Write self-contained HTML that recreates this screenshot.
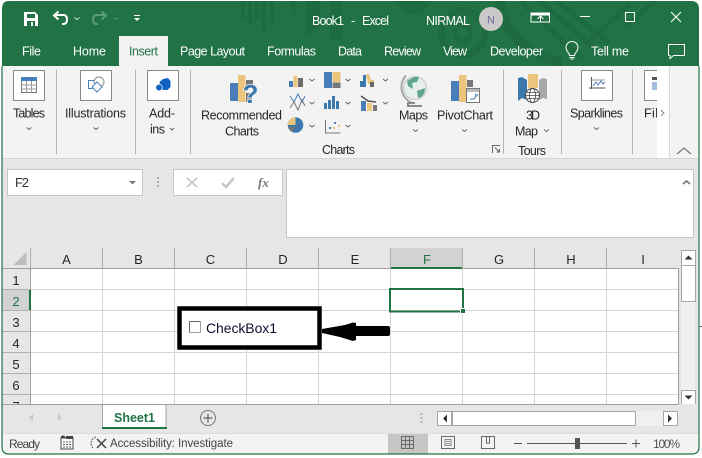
<!DOCTYPE html>
<html><head><meta charset="utf-8"><style>
html,body{margin:0;padding:0;background:#fff;width:702px;height:458px;overflow:hidden}
svg{display:block}
text{font-family:"Liberation Sans",sans-serif;font-size:12.5px;fill:#262626}
.w{fill:#fff}
</style></head><body>
<svg width="702" height="458" viewBox="0 0 702 458" xmlns="http://www.w3.org/2000/svg">
<defs><clipPath id="win"><path d="M9 1H691Q699 1 699 9V447Q699 454 692 454H9Q2 454 2 447V9Q2 1 9 1Z"/></clipPath></defs>
<rect width="702" height="458" fill="#fff"/>
<g clip-path="url(#win)">
<rect x="0" y="0" width="702" height="458" fill="#e6e6e6"/>
<rect x="0" y="0" width="702" height="66" fill="#217346"/>
<!-- title pattern -->
<g fill="#1f6b41">
<rect x="241" y="1" width="4" height="17"/><rect x="248" y="1" width="4" height="24"/><rect x="255" y="1" width="4" height="18"/><rect x="262" y="1" width="4" height="33"/><rect x="270" y="1" width="4" height="21"/>
<path d="M289 1h7l-1 15z"/><path d="M307 1h13v25l-13 10z"/><path d="M330 1h12v38h-12z"/>
<path d="M396 1h36q-6 13-18 13t-18-13z"/>
</g>
<g fill="none" stroke="#1f6b41">
<circle cx="463" cy="33" r="22" stroke-width="7"/>
<circle cx="463" cy="33" r="8" stroke-width="5"/>
<path d="M500 1q8 50 62 61" stroke-width="10"/>
<path d="M520 1l60 56M540 1l55 48M557 1l52 42M630 4l-40 36M655 1l-30 26" stroke-width="5"/>
</g>
<!-- QAT -->
<path d="M24 12h11l3 3v11H24z" fill="#fff"/><rect x="27" y="14" width="8" height="4" fill="#217346"/><rect x="27" y="21" width="8" height="5" fill="#217346"/><rect x="31" y="22" width="2" height="4" fill="#fff"/>
<path d="M55 15h9q3 .5 3 4.500t-3 4.500h-2M58.500 11.500L54 15.500l4.500 4" fill="none" stroke="#fff" stroke-width="2"/>
<path d="M74.500 17.500l2.500 2 2.500-2" fill="none" stroke="#cfe3d7" stroke-width="1"/>
<path d="M105 15h-9q-3 .5-3 4.500t3 4.500h2M101.500 11.500L106 15.500l-4.500 4" fill="none" stroke="#5a9b78" stroke-width="2"/>
<path d="M113.500 17.500l2.500 2 2.500-2" fill="none" stroke="#4d9270" stroke-width="1"/>
<rect x="134" y="15" width="6" height="1" fill="#fff"/><path d="M134 18h6l-3 3z" fill="#fff"/>
<text class="w" x="312" y="25" textLength="32">Book1</text>
<text class="w" x="351" y="25">-</text>
<text class="w" x="362" y="25" textLength="27">Excel</text>
<text class="w" x="426" y="25" textLength="44">NIRMAL</text>
<circle cx="491" cy="19" r="12" fill="#cbc9c8"/>
<text x="491" y="23.500" text-anchor="middle" style="font-size:11px;fill:#6e6a9c">N</text>
<!-- window controls -->
<rect x="531" y="13" width="18.500" height="9" fill="none" stroke="#fff"/><rect x="531" y="13" width="18.500" height="2.500" fill="#fff"/><path d="M540.500 22v-6M537.500 19l3-3 3 3" fill="none" stroke="#fff"/>
<rect x="580" y="16" width="10" height="1" fill="#fff"/>
<rect x="625.500" y="12.500" width="9" height="9" fill="none" stroke="#fff"/>
<path d="M671 12l10 10M681 12l-10 10" stroke="#fff" stroke-width="1.100"/>
<!-- tabs -->
<path d="M119 36h49v31h-49z" fill="#f3f3f3"/>
<text class="w" x="22" y="55.500" textLength="19">File</text>
<text class="w" x="73" y="55.500" textLength="33">Home</text>
<text x="129" y="55.500" textLength="29" style="fill:#217346">Insert</text>
<text class="w" x="180" y="55.500" textLength="65">Page Layout</text>
<text class="w" x="267" y="55.500" textLength="49">Formulas</text>
<text class="w" x="338" y="55.500" textLength="24">Data</text>
<text class="w" x="384" y="55.500" textLength="37">Review</text>
<text class="w" x="443" y="55.500" textLength="24">View</text>
<text class="w" x="490" y="55.500" textLength="53">Developer</text>
<text class="w" x="591" y="55.500" textLength="38">Tell me</text>
<path d="M569.500 55.500c-.3-3-3.500-4-3.500-8a6 6 0 0 1 12 0c0 4-3.200 5-3.500 8zM569.500 57.500h5M570.500 59h3" fill="none" stroke="#fff"/>
<path d="M668.500 44.500h16v11h-11l-3.500 3v-3h-1.500z" fill="none" stroke="#fff"/>
<!-- ribbon -->
<rect x="0" y="66" width="702" height="92" fill="#f3f3f3"/>
<rect x="0" y="158" width="702" height="1" fill="#d6d6d6"/>
<g fill="#b3b3b3"><rect x="56" y="70" width="1" height="84"/><rect x="135" y="70" width="1" height="84"/><rect x="190" y="70" width="1" height="84"/><rect x="503" y="70" width="1" height="84"/><rect x="561" y="70" width="1" height="84"/><rect x="632" y="70" width="1" height="84"/></g>
<!-- boxed icons -->
<g fill="#fff" stroke="#8a8a8a"><rect x="13.500" y="70.500" width="31" height="30"/><rect x="80.500" y="70.500" width="31" height="30"/><rect x="147.500" y="70.500" width="31" height="30"/><rect x="581.500" y="70.500" width="31" height="30"/><rect x="644.500" y="70.500" width="20" height="30"/></g>
<!-- tables -->
<rect x="21.500" y="77.500" width="15" height="15" fill="#fff" stroke="#777"/><rect x="21" y="77" width="16" height="4" fill="#4a7ebb"/>
<path d="M21 85h16M21 89h16M26.500 81v12M31.500 81v12" stroke="#999" fill="none"/>
<!-- illustrations -->
<path d="M94 80.500h-5.500v8h4" fill="none" stroke="#4a7ebb"/><circle cx="99" cy="82" r="5" fill="none" stroke="#8a8a8a"/><path d="M97 82l5 5-5 5-5-5z" fill="#fff" stroke="#4a7ebb"/>
<!-- addins -->
<path d="M163 79l5-1 2.500 3v6l-3 3h-5l-.5-4-2-1-.5-3z" fill="#0f62c0"/><circle cx="159" cy="87.500" r="3.300" fill="#0f62c0" stroke="#fff" stroke-width=".7"/>
<text x="13" y="117.500" textLength="32">Tables</text>
<text x="65" y="117.500" textLength="61">Illustrations</text>
<text x="149" y="117.500" textLength="26">Add-</text>
<text x="150" y="133.500" textLength="15">ins</text>
<text x="201" y="119.500" textLength="81">Recommended</text>
<text x="225" y="135.500" textLength="34">Charts</text>
<text x="399" y="119.500" textLength="29">Maps</text>
<text x="437" y="119.500" textLength="56">PivotChart</text>
<text x="526" y="119.500" textLength="14">3D</text>
<text x="515" y="135.500" textLength="23">Map</text>
<text x="570" y="117.500" textLength="53">Sparklines</text>
<text x="644" y="117.500" textLength="14">Fil</text>
<text x="322" y="154" textLength="33">Charts</text>
<text x="518" y="155" textLength="28">Tours</text>
<!-- chevrons -->
<g fill="none" stroke="#666">
<path d="M26.500 127.500l2.500 2 2.500-2M93.500 127.500l2.500 2 2.500-2M170 128l2 2 2-2M413 129.500l2.500 2 2.500-2M462 129.500l2.500 2 2.500-2M544 129.500l2.500 2 2.500-2M594 127.500l2.500 2 2.500-2"/>
<path d="M309.500 79l2.500 2 2.500-2M345.500 79l2.500 2 2.500-2M383 79l2.500 2 2.500-2M309.500 102l2.500 2 2.500-2M345.500 102l2.500 2 2.500-2M383 102l2.500 2 2.500-2M309.500 125l2.500 2 2.500-2M345.500 125l2.500 2 2.500-2"/>
</g>
<!-- Recommended charts icon -->
<rect x="230" y="83" width="8" height="18" fill="#4a7ebb"/><rect x="238" y="75" width="7.500" height="27" fill="#ecc57c"/><rect x="246" y="80" width="7" height="6" fill="#777"/><rect x="246" y="93" width="6" height="9" fill="#777"/>
<text x="250.500" y="103" text-anchor="middle" style="font-size:26px;font-weight:bold;fill:#3d78ad;stroke:#f3f3f3;stroke-width:1.500px;paint-order:stroke">?</text>
<!-- small charts col 1 -->
<rect x="289" y="81" width="4" height="6" fill="#4a7ebb"/><rect x="293.500" y="76" width="4" height="11" fill="#ecc57c"/><rect x="298" y="78" width="5" height="9" fill="#6d6d6d"/>
<path d="M290 96l4 6 4-8 4 8 3-6" fill="none" stroke="#4a7ebb"/><path d="M290 108l4-6 4 8 4-10 3 6" fill="none" stroke="#777"/>
<circle cx="295.500" cy="125" r="7.800" fill="#3d78ad"/><path d="M295.500 117.200v7.800h-7.800a7.800 7.800 0 0 1 7.800-7.800z" fill="#ecc57c"/><path d="M288 127h7.500l-3.500 4.500q-3-1.500-4-4.500z" fill="#777"/>
<!-- col 2 -->
<rect x="324" y="72" width="8" height="16" fill="#4a7ebb"/><rect x="332.500" y="72" width="8" height="10" fill="#ecc57c"/><rect x="332.500" y="82.500" width="8" height="5.500" fill="#777"/>
<g fill="#3d78ad"><rect x="324" y="103" width="3" height="6"/><rect x="328" y="100" width="3" height="9"/><rect x="332" y="96" width="3" height="13"/><rect x="336" y="101" width="3" height="8"/></g>
<path d="M325.500 120v13h15" fill="none" stroke="#777"/><g fill="#4a7ebb"><rect x="329" y="127" width="2" height="2"/><rect x="334" y="122" width="2" height="2"/></g><g fill="#ecc57c"><rect x="333" y="127" width="2" height="2"/><rect x="338" y="125" width="2" height="2"/></g>
<!-- col 3 -->
<path d="M360 87v-6h3v-6h3v12z" fill="#3d78ad"/><path d="M366 74h3l2 6h3v4h-6z" fill="#ecc57c"/><rect x="370" y="82" width="4" height="5" fill="#666"/>
<rect x="361" y="101" width="5" height="10" fill="#4a7ebb"/><rect x="367" y="103" width="5" height="8" fill="#ecc57c"/><rect x="373" y="105" width="4" height="6" fill="#777"/><path d="M361 96l7 5 8 1" stroke="#555" fill="none" stroke-width="1.500"/>
<!-- globe -->
<path d="M406 75.500a17 17 0 0 0 8 28" fill="none" stroke="#a6a6a6" stroke-width="2"/>
<circle cx="415" cy="88" r="11.500" fill="#e6efea" stroke="#c4c4c4"/><path d="M407 81q6-5 12-4l-2 5-5 1 1 6-5-3zM417 91l8-3q0 6-4 9l-3 1z" fill="#5fa58c"/>
<path d="M415 103h-7v3h14" fill="none" stroke="#8a8a8a" stroke-width="2"/>
<!-- pivot chart -->
<rect x="451" y="81" width="8" height="20" fill="#4a7ebb"/><rect x="459" y="75" width="7.500" height="27" fill="#ecc57c"/><rect x="467" y="80" width="6" height="7" fill="#777"/>
<rect x="466.500" y="88.500" width="13" height="14" fill="#fff" stroke="#777"/><rect x="467" y="89" width="12" height="3" fill="#bbb"/><path d="M470 99h4l2-3M475 94l1.500 2 1.500-2" fill="none" stroke="#3d78ad"/>
<!-- 3d map -->
<path d="M518 78l4-1v21l-4 3zM522 77l5 3v20l-5-2z" fill="#3d78ad"/><rect x="528" y="74" width="10" height="14" fill="#ecc57c"/>
<path d="M539 80l4-2 4 1v20l-4-1-4 2z" fill="#a8a8a8"/>
<circle cx="532.500" cy="95.500" r="7" fill="#fff" stroke="#444"/><ellipse cx="532.500" cy="95.500" rx="3" ry="7" fill="none" stroke="#444" stroke-width=".8"/><path d="M526 95.500h13M527 92.500h11M527 98.500h11" stroke="#444" stroke-width=".7"/>
<!-- sparklines -->
<path d="M591.500 77v12M589 88h16.500" stroke="#555" fill="none"/><path d="M593 86l3-4 2 3 3-4 2 3 2-2" stroke="#4a7ebb" fill="none"/><path d="M590 80h15" stroke="#999"/>
<!-- filters partial -->
<rect x="652" y="77" width="6" height="3" fill="#555"/><rect x="652" y="82" width="5" height="8" fill="#4a7ebb" opacity=".5"/>
<!-- white scroller -->
<rect x="657" y="66" width="12.500" height="92" fill="#fff"/><rect x="669" y="66" width="1" height="92" fill="#d8d8d8"/>
<path d="M661 110l3 3-3 3" fill="none" stroke="#888"/>
<path d="M677 154l7-6 7 6" fill="none" stroke="#555"/>
<!-- dialog launcher -->
<path d="M492.500 153v-7.500h7.500M495 147.500l4 4M499.500 149v3h-3" fill="none" stroke="#666"/>
<!-- formula row -->
<rect x="7.500" y="169.500" width="135" height="26" fill="#fff" stroke="#c6c6c6"/>
<text x="15" y="187" textLength="14" style="font-size:13px;fill:#333">F2</text>
<path d="M129 181h7l-3.500 3.500z" fill="#777"/>
<g fill="#aaa"><rect x="157" y="177" width="2" height="2"/><rect x="157" y="181" width="2" height="2"/><rect x="157" y="185" width="2" height="2"/></g>
<rect x="173.500" y="169.500" width="109" height="26" fill="#fff" stroke="#c6c6c6"/>
<path d="M187 178l10 9M197 178l-10 9" stroke="#c6c6c6" stroke-width="1.800"/>
<path d="M222 183l4 4 8-9" stroke="#c6c6c6" stroke-width="2.500" fill="none"/>
<text x="258" y="187" style="font-family:'Liberation Serif',serif;font-style:italic;font-weight:bold;font-size:13px;fill:#777">fx</text>
<rect x="286.500" y="169.500" width="407" height="68" fill="#fff" stroke="#c6c6c6"/>
<path d="M683 184l3.500-3 3.500 3" fill="none" stroke="#777" stroke-width="1.800"/>
<!-- grid -->
<rect x="2" y="248" width="677" height="20" fill="#e6e6e6"/>
<rect x="2" y="268" width="28" height="137" fill="#e6e6e6"/>
<rect x="30" y="268" width="648" height="137" fill="#fff"/>
<rect x="390.500" y="248" width="72" height="20" fill="#d2d2d2"/>
<rect x="2" y="289" width="28" height="21" fill="#d2d2d2"/>
<path d="M26.500 252v13h-13z" fill="#bdbdbd"/>
<rect x="2" y="268" width="676" height="1" fill="#9f9f9f"/>
<g stroke="#d4d4d4"><path d="M102.500 269V405M174.500 269V405M246.500 269V405M318.500 269V405M390.500 269V405M462.500 269V405M534.500 269V405M606.500 269V405"/><path d="M30 289.500H678M30 310.500H678M30 331.500H678M30 352.500H678M30 373.500H678M30 394.500H678"/></g>
<g stroke="#b0b0b0"><path d="M30.500 248V268M102.500 248V268M174.500 248V268M246.500 248V268M318.500 248V268M390.500 248V268M462.500 248V268M534.500 248V268M606.500 248V268"/><path d="M2 289.500H30M2 310.500H30M2 331.500H30M2 352.500H30M2 373.500H30M2 394.500H30"/></g>
<rect x="30" y="268" width="1" height="137" fill="#9f9f9f"/>
<rect x="678" y="268" width="1" height="137" fill="#9f9f9f"/>
<rect x="391" y="267" width="71" height="2" fill="#217346"/>
<rect x="29" y="290" width="2" height="20" fill="#217346"/>
<text x="66.500" y="264" text-anchor="middle" style="font-size:13px">A</text>
<text x="138.500" y="264" text-anchor="middle" style="font-size:13px">B</text>
<text x="210.500" y="264" text-anchor="middle" style="font-size:13px">C</text>
<text x="283" y="264" text-anchor="middle" style="font-size:13px">D</text>
<text x="355" y="264" text-anchor="middle" style="font-size:13px">E</text>
<text x="427" y="264" text-anchor="middle" style="font-size:13px;fill:#217346">F</text>
<text x="499" y="264" text-anchor="middle" style="font-size:13px">G</text>
<text x="571" y="264" text-anchor="middle" style="font-size:13px">H</text>
<text x="643" y="264" text-anchor="middle" style="font-size:13px">I</text>
<text x="16" y="285" text-anchor="middle" style="font-size:13px">1</text>
<text x="16" y="306" text-anchor="middle" style="font-size:13px;fill:#217346">2</text>
<text x="16" y="327" text-anchor="middle" style="font-size:13px">3</text>
<text x="16" y="348" text-anchor="middle" style="font-size:13px">4</text>
<text x="16" y="369" text-anchor="middle" style="font-size:13px">5</text>
<text x="16" y="390" text-anchor="middle" style="font-size:13px">6</text>
<text x="16" y="411" text-anchor="middle" style="font-size:13px">7</text>
<!-- selection -->
<rect x="390" y="289" width="73" height="22.500" fill="none" stroke="#217346" stroke-width="2"/>
<rect x="460.500" y="308.500" width="5" height="5" fill="#217346" stroke="#fff"/>
<!-- annotation box -->
<rect x="179.500" y="308.500" width="140" height="39" fill="#fff" stroke="#000" stroke-width="4.500"/>
<rect x="189.500" y="321.500" width="11" height="11" fill="#fff" stroke="#a0a0a0"/>
<path d="M189.500 332v-10.500H200" fill="none" stroke="#666"/>
<text x="206" y="333" textLength="71" style="font-size:14px;fill:#0f1030">CheckBox1</text>
<path d="M322 329L345 325L353 322.500L356 323V326H388Q390 326 390 328V334Q390 336 388 336H356V340L353 341L340 337L322 333z" fill="#000"/>
<!-- vertical scrollbar -->
<rect x="680" y="248" width="19" height="157" fill="#e6e6e6"/>
<rect x="681" y="265" width="14" height="125" fill="#f0f0f0"/>
<rect x="681.500" y="250.500" width="14" height="15" fill="#fff" stroke="#a6a6a6"/>
<path d="M684.500 259.500h8l-4-4z" fill="#333"/>
<rect x="681.500" y="265.500" width="14" height="36" fill="#fff" stroke="#a6a6a6"/>
<rect x="681.500" y="390.500" width="14" height="14" fill="#fff" stroke="#a6a6a6"/>
<path d="M684.500 395.500h8l-4 4z" fill="#333"/>
<!-- sheet bar -->
<rect x="2" y="404" width="697" height="29" fill="#e6e6e6"/>
<rect x="2" y="404" width="677" height="1" fill="#9f9f9f"/>
<path d="M33 414v7l-4-3.500zM58 414v7l4-3.500z" fill="#c6c6c6"/>
<path d="M102.500 405v23h63.500v-23" fill="#fff" stroke="#a6a6a6"/>
<rect x="102" y="427" width="65" height="2" fill="#217346"/>
<text x="114" y="422" textLength="41" style="font-weight:bold;font-size:12.500px;fill:#217346">Sheet1</text>
<circle cx="208" cy="418" r="7.500" fill="none" stroke="#777"/><path d="M203.500 418h9M208 413.500v9" stroke="#777" stroke-width="1.400"/>
<g fill="#c2c2c2"><rect x="420" y="413" width="3" height="2"/><rect x="420" y="417" width="3" height="2"/><rect x="420" y="421" width="3" height="2"/></g>
<rect x="437" y="411" width="240" height="15" fill="#f0f0f0"/>
<rect x="437.500" y="411.500" width="14" height="14" fill="#fff" stroke="#a6a6a6"/>
<path d="M447 414.500v8l-4-4z" fill="#333"/>
<rect x="452.500" y="411.500" width="183" height="14" fill="#fff" stroke="#a6a6a6"/>
<rect x="663.500" y="411.500" width="14" height="14" fill="#fff" stroke="#a6a6a6"/>
<path d="M668 414.500v8l4-4z" fill="#333"/>
<!-- status bar -->
<rect x="2" y="433" width="697" height="22" fill="#f3f3f3"/>
<rect x="2" y="433" width="697" height="1" fill="#dcdcdc"/>
<text x="9" y="448" textLength="31" style="font-size:12px;fill:#444">Ready</text>
<circle cx="63" cy="438" r="2.500" fill="#444"/><rect x="61" y="438" width="12" height="11" fill="#fff" stroke="#444"/><rect x="66" y="436" width="7" height="3" fill="#444"/><path d="M63 442h9M63 444.500h9M63 447h9" stroke="#555" stroke-dasharray="2 1"/>
<path d="M96 437a6.500 6.500 0 0 0-3 11" fill="none" stroke="#555" stroke-dasharray="2 1"/><path d="M97 439l9 9M106 439l-9 9" stroke="#444" stroke-width="1.500"/>
<text x="110" y="447" textLength="123" style="font-size:11.500px;fill:#444">Accessibility: Investigate</text>
<rect x="388" y="434" width="40" height="21" fill="#c6c6c6"/>
<rect x="401.500" y="436.500" width="12" height="12" fill="none" stroke="#6a6a6a"/><path d="M405.500 437v11M409.500 437v11M402 440.500h11M402 444.500h11" stroke="#6a6a6a"/>
<rect x="441.500" y="436.500" width="13" height="12" fill="none" stroke="#6a6a6a"/><path d="M445 439.500h6v6h-6zM446 441.500h4M446 443.500h4" fill="none" stroke="#6a6a6a" stroke-width=".8"/>
<rect x="481.500" y="436.500" width="13" height="12" fill="none" stroke="#6a6a6a"/><path d="M486.500 437v6h3v-6" fill="none" stroke="#6a6a6a"/>
<rect x="514" y="443" width="8" height="1" fill="#555"/>
<rect x="527" y="443" width="100" height="1" fill="#555"/>
<rect x="575" y="438" width="5" height="11" fill="#555"/>
<path d="M632 443.500h8M636 439.500v8" stroke="#555"/>
<text x="653" y="448" textLength="27" style="font-size:12px;fill:#555">100%</text>
</g>
<!-- window border -->
<path d="M2 66V447Q2 454 9 454H692Q699 454 699 447V66" fill="none" stroke="#217346" stroke-width="1.200"/>
<rect x="700" y="326" width="2" height="1" fill="#555"/>
</svg>
</body></html>
